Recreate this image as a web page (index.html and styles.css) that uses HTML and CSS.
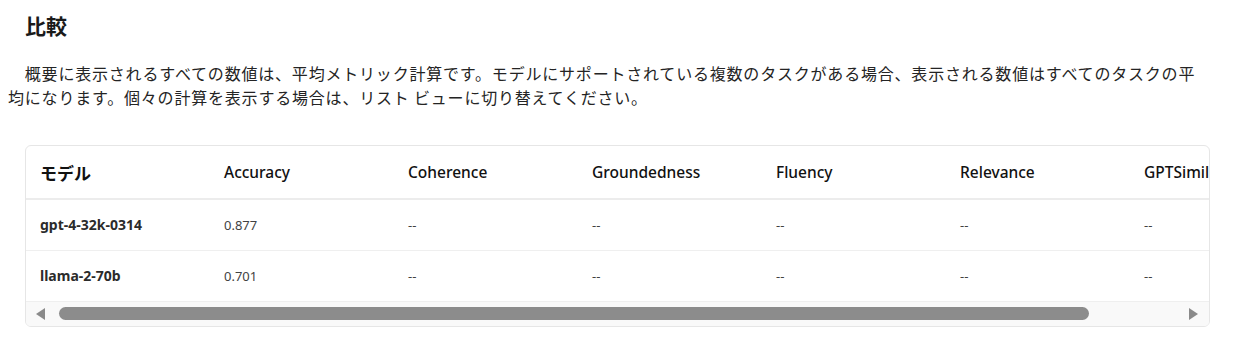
FILE: index.html
```html
<!DOCTYPE html>
<html lang="ja">
<head>
<meta charset="utf-8">
<link rel="stylesheet" href="styles.css">
</head>
<body>
<main class="page">
  <h2 class="title">比較</h2>
  <p class="desc">　概要に表示されるすべての数値は、平均メトリック計算です。モデルにサポートされている複数のタスクがある場合、表示される数値はすべてのタスクの平均になります。個々の計算を表示する場合は、リスト ビューに切り替えてください。</p>
  <div class="card">
    <div class="scroller">
      <table class="grid">
        <thead>
          <tr>
            <th class="model-h">モデル</th>
            <th>Accuracy</th>
            <th>Coherence</th>
            <th>Groundedness</th>
            <th>Fluency</th>
            <th>Relevance</th>
            <th>GPTSimilarity</th>
          </tr>
        </thead>
        <tbody>
          <tr>
            <td class="model">gpt-4-32k-0314</td>
            <td>0.877</td><td>--</td><td>--</td><td>--</td><td>--</td><td>--</td>
          </tr>
          <tr>
            <td class="model">llama-2-70b</td>
            <td>0.701</td><td>--</td><td>--</td><td>--</td><td>--</td><td>--</td>
          </tr>
        </tbody>
      </table>
    </div>
    <div class="hbar">
      <span class="arrow left"></span>
      <div class="track"><div class="thumb"></div></div>
      <span class="arrow right"></span>
    </div>
  </div>
</main>
</body>
</html>
```
FILE: styles.css
```css
html, body {
  margin: 0;
  padding: 0;
  background: #ffffff;
}
body {
  font-family: "Noto Sans", "Noto Sans CJK JP", sans-serif;
  color: #242424;
}
.page {
  padding: 0 36px 0 8px;
}
.title {
  margin: 0;
  padding: 9px 0 0 17px;
  font-family: "Noto Sans CJK JP", sans-serif;
  font-size: 21px;
  line-height: 32px;
  font-weight: 700;
  color: #1a1a1a;
}
.desc {
  margin: 20px 0 0 0;
  font-family: "Noto Sans CJK JP", sans-serif;
  font-size: 16px;
  line-height: 24px;
  letter-spacing: 0.8px;
  color: #242424;
}
.card {
  margin: 36px 0 0 17px;
  border: 1px solid #e6e6e6;
  border-radius: 6px;
  overflow: hidden;
  background: #fff;
}
.scroller {
  overflow: hidden;
}
.grid {
  border-collapse: collapse;
  table-layout: fixed;
  width: 1288px;
}
.grid th, .grid td {
  width: 184px;
  text-align: left;
  white-space: nowrap;
  overflow: hidden;
  padding: 0 0 0 14px;
  box-sizing: border-box;
}
.grid th {
  height: 53px;
  font-size: 15.5px;
  font-weight: 500;
  color: #111;
  border-bottom: 2px solid #ececec;
}
.grid th.model-h {
  font-family: "Noto Sans CJK JP", sans-serif;
  font-size: 17px;
  font-weight: 700;
}
.grid td {
  height: 51px;
  font-size: 13px;
  color: #424242;
  border-bottom: 1px solid #efefef;
}
.grid td.model {
  font-size: 14px;
  font-weight: 700;
  color: #2b2b2b;
}
.hbar {
  display: flex;
  align-items: center;
  height: 24px;
  background: #f9f9f9;
  padding: 0 11px 0 10px;
}
.arrow {
  width: 0;
  height: 0;
  border-top: 6px solid transparent;
  border-bottom: 6px solid transparent;
}
.arrow.left {
  border-right: 9px solid #8a8a8a;
}
.arrow.right {
  border-left: 9px solid #8a8a8a;
}
.track {
  flex: 1;
  padding: 0 100px 0 14px;
}
.thumb {
  height: 13px;
  border-radius: 7px;
  background: #8c8c8c;
}
```
